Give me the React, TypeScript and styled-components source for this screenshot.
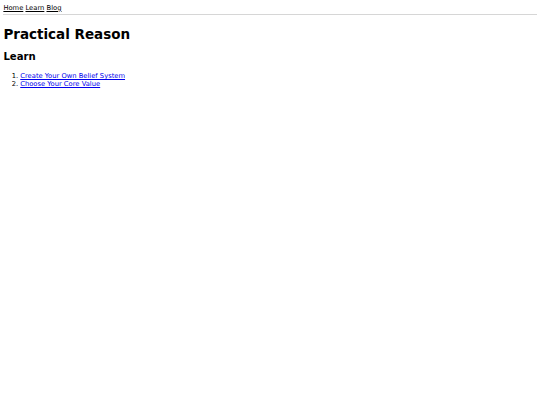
import styled, { createGlobalStyle } from 'styled-components';

// the reference is a plain HTML page photographed at 1280 wide and shrunk to 540,
// so every default size is multiplied by 540 / 1280
const GlobalStyle = createGlobalStyle`
    body {
        margin: 3.375px;
        font-family: 'DejaVu Sans', Verdana, sans-serif;
        font-size: 6.75px;
        background: white;
        color: black;
    }
`;

const links = [
    'Create Your Own Belief System',
    'Choose Your Core Value'
];

const App = (): JSX.Element => {
    return (
        <>
            <GlobalStyle />
            <Nav>
                <NavLink href="#">Home</NavLink>{' '}
                <NavLink href="#">Learn</NavLink>{' '}
                <NavLink href="#">Blog</NavLink>
            </Nav>
            <Rule />
            <Title>Practical Reason</Title>
            <Section>Learn</Section>
            <List>
                {links.map((name) => (
                    <li key={name}>
                        <ItemLink href="#">{name}</ItemLink>
                    </li>
                ))}
            </List>
        </>
    );
};

const Nav = styled.nav`
    padding-top: 0.5px;
`;

const NavLink = styled.a`
    color: black;
    text-decoration: underline;
`;

const Rule = styled.hr`
    border: none;
    border-top: 1.5px solid #d6d6d6;
    margin: 2.4px 0 4.8px;
`;

const Title = styled.h1`
    font-size: 13.5px;
    margin: 11px 0 9px;
`;

const Section = styled.h2`
    font-size: 10.125px;
    margin: 8.4px 0;
`;

const List = styled.ol`
    margin: 10px 0 6.75px;
    padding-left: 16.875px;
`;

const ItemLink = styled.a`
    color: #0000ee;
`;

export default App;
